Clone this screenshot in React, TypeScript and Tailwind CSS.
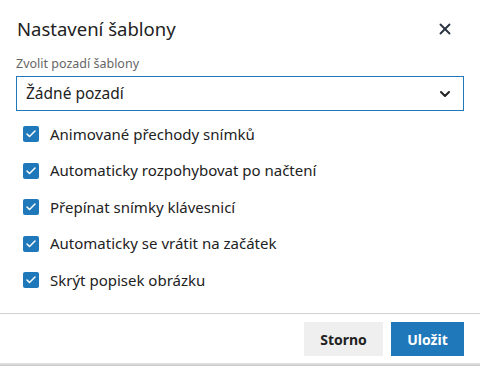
import { Check, ChevronDown, X } from "lucide-react";

const options = [
  "Animované přechody snímků",
  "Automaticky rozpohybovat po načtení",
  "Přepínat snímky klávesnicí",
  "Automaticky se vrátit na začátek",
  "Skrýt popisek obrázku",
];

export default function App() {
  return (
    <div className="w-[480px] h-[366px] bg-white flex flex-col text-[#222] font-['Noto_Sans',sans-serif]">
      <div className="flex items-center justify-between pl-[17px] pr-[26px] pt-[10px] h-[48px]">
        <h1 className="text-[18.5px] font-normal text-[#222]">Nastavení šablony</h1>
        <X size={18} strokeWidth={2.5} className="text-[#2a3340]" />
      </div>

      <div className="px-4 pt-[8px]">
        <label className="block text-[12.5px] leading-[16px] text-[#666]">Zvolit pozadí šablony</label>
        <div className="mt-[4px] h-[35px] border border-[#1f78b9] flex items-center justify-between pl-[9px] pr-[10px]">
          <span className="text-[15.5px] text-[#222]">Žádné pozadí</span>
          <ChevronDown size={16} strokeWidth={3} className="text-[#222]" />
        </div>
      </div>

      <div className="flex flex-col pl-[23px] pt-[15px] gap-[20.5px]">
        {options.map((o) => (
          <div key={o} className="flex items-center gap-[11px] h-[16px]">
            <span className="w-4 h-4 rounded-[2px] bg-[#1f78b9] flex items-center justify-center">
              <Check size={12} strokeWidth={3} className="text-white" />
            </span>
            <span className="text-[15px] text-[#222]">{o}</span>
          </div>
        ))}
      </div>

      <div className="mt-auto border-t border-[#d0d0d0] flex justify-end gap-2 pt-[8px] pr-4 h-[50px]">
        <button className="w-[79px] h-[34px] bg-[#efefef] text-[14px] font-bold text-[#222]">Storno</button>
        <button className="w-[73px] h-[34px] bg-[#1f78b9] text-[14px] font-bold text-white">Uložit</button>
      </div>
      <div className="h-[3px] bg-gradient-to-b from-[#e6e6e6] to-[#c8c8c8]" />
    </div>
  );
}
